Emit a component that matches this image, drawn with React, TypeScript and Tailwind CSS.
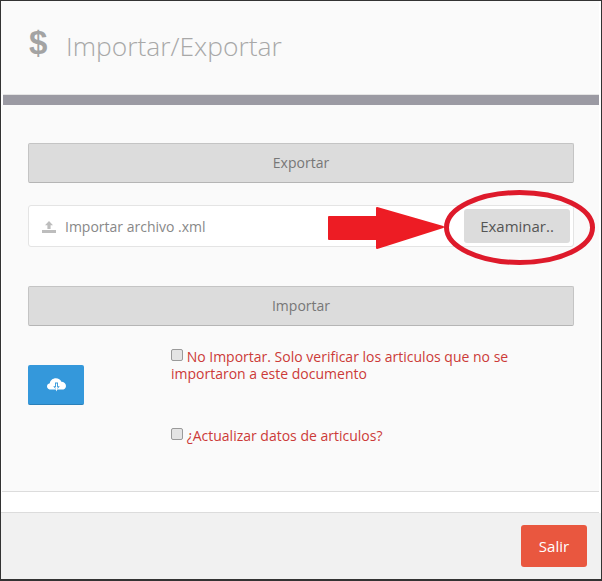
// Importar/Exportar modal
function UploadIcon() {
  return (
    <svg viewBox="0 0 14 12" className="h-3 w-[14px] fill-[#bdbdbd]">
      <path d="M7 0 L11 4.2 H8.6 V8 H5.4 V4.2 H3 Z" />
      <path d="M0 9 H14 V12 H0 Z" />
    </svg>
  )
}

function CloudIcon() {
  return (
    <svg viewBox="0 0 19 14" className="h-[14px] w-[19px]">
      <path
        className="fill-white"
        d="M4.2 11.6 C1.7 11.6 0 10.2 0 8.4 C0 6.8 1.2 5.6 2.8 5.3 C3.1 2.4 5.7 0.2 8.9 0.2 C11.4 0.2 13.5 1.6 14.4 3.7 C16.9 3.8 19 5.6 19 7.9 C19 10 17.2 11.6 14.8 11.6 Z"
      />
      <path className="fill-[#3498db]" d="M8 4.6 H11 V8.2 H12.8 L9.5 12 L6.2 8.2 H8 Z" />
      <path className="fill-white" d="M8.9 5.4 H10.1 V9.2 H11 L9.5 13.6 L8 9.2 H8.9 Z" />
    </svg>
  )
}

function GreyButton({ label }: { label: string }) {
  return (
    <button className="h-10 w-full rounded-[2px] border border-[#c4c4c4] border-b-[#b5b5b5] bg-[#dcdcdc] text-sm text-[#777]">
      {label}
    </button>
  )
}

function Check() {
  return (
    <span className="inline-block h-3 w-3 rounded-[2px] border border-[#9a9a9a] bg-[#e4e4e4] align-[1px]" />
  )
}

export default function App() {
  return (
    <div className="h-[581px] w-[602px] overflow-hidden bg-[#333] pt-[1px] pl-[1px] pr-[1px] pb-[2px] font-['Open_Sans',sans-serif]">
      <div className="relative flex h-full flex-col bg-white">
        <header className="mr-[2px] flex h-[93px] items-center bg-[#fafafa] pb-[2px] pl-[28px]">
          <span className="-mt-2 w-[37px] font-['Liberation_Sans',sans-serif] text-[33px] font-bold leading-none text-[#a3a3a3]">
            $
          </span>
          <h1 className="text-[26.4px] font-light text-[#a8a8a8]">Importar/Exportar</h1>
        </header>
        <div className="mx-[2px] h-[11px] shrink-0 border-t border-[#e4e4e4] bg-[#9b9aa3]" />

        <main className="ml-[1px] mr-[2px] flex h-[387px] shrink-0 flex-col border-b border-[#dcdcdc] bg-[#fafafa] pl-[26px] pr-[25px] pt-[38px]">
          <GreyButton label="Exportar" />

          <div className="mt-[22px] flex h-[42px] items-center justify-between rounded-[3px] border border-[#e4e4e4] bg-white pl-[13px] pr-[3px]">
            <div className="flex items-center gap-[9px] pt-px text-sm text-[#888]">
              <UploadIcon />
              Importar archivo .xml
            </div>
            <button className="h-[34px] w-[106px] rounded-[3px] bg-[#dcdcdc] pt-px text-[15px] text-[#555]">
              Examinar..
            </button>
          </div>

          <div className="mt-[39px]">
            <GreyButton label="Importar" />
          </div>

          <div className="mt-[21px] flex">
            <div className="w-[143px] pt-[18px]">
              <button className="flex h-10 w-14 items-center justify-center rounded-[2px] border-b border-[#2a80b9] bg-[#3498db]">
                <CloudIcon />
              </button>
            </div>
            <div className="w-[360px] pt-px text-sm leading-[17px] text-[#cc3a38]">
              <p>
                <Check /> No Importar. Solo verificar los articulos que no se
                <br />
                importaron a este documento
              </p>
              <p className="mt-[45px]">
                <Check /> ¿Actualizar datos de articulos?
              </p>
            </div>
          </div>
        </main>

        <div className="mr-[2px] h-[21px] shrink-0 border-b border-[#dcdcdc] bg-white" />

        <footer className="flex flex-1 items-start justify-end bg-[#f1f1f1] pr-[14px] pt-[12px]">
          <button className="h-[42px] w-[66px] rounded-[3px] bg-[#e9573f] text-[15px] text-white">
            Salir
          </button>
        </footer>

        {/* red marks drawn over the screenshot */}
        <svg
          viewBox="0 0 600 578"
          className="pointer-events-none absolute left-0 top-0 h-[578px] w-[600px] overflow-visible"
        >
          <path
            d="M328 216 H376 V207 L442 226 L376 247 V238 H328 Z"
            fill="#ed1c24"
            stroke="#ed1c24"
            strokeWidth="2"
            strokeLinejoin="round"
          />
          <ellipse cx="518.5" cy="226.5" rx="73" ry="35" fill="none" stroke="#de1a2b" strokeWidth="5" />
        </svg>
      </div>
    </div>
  )
}
